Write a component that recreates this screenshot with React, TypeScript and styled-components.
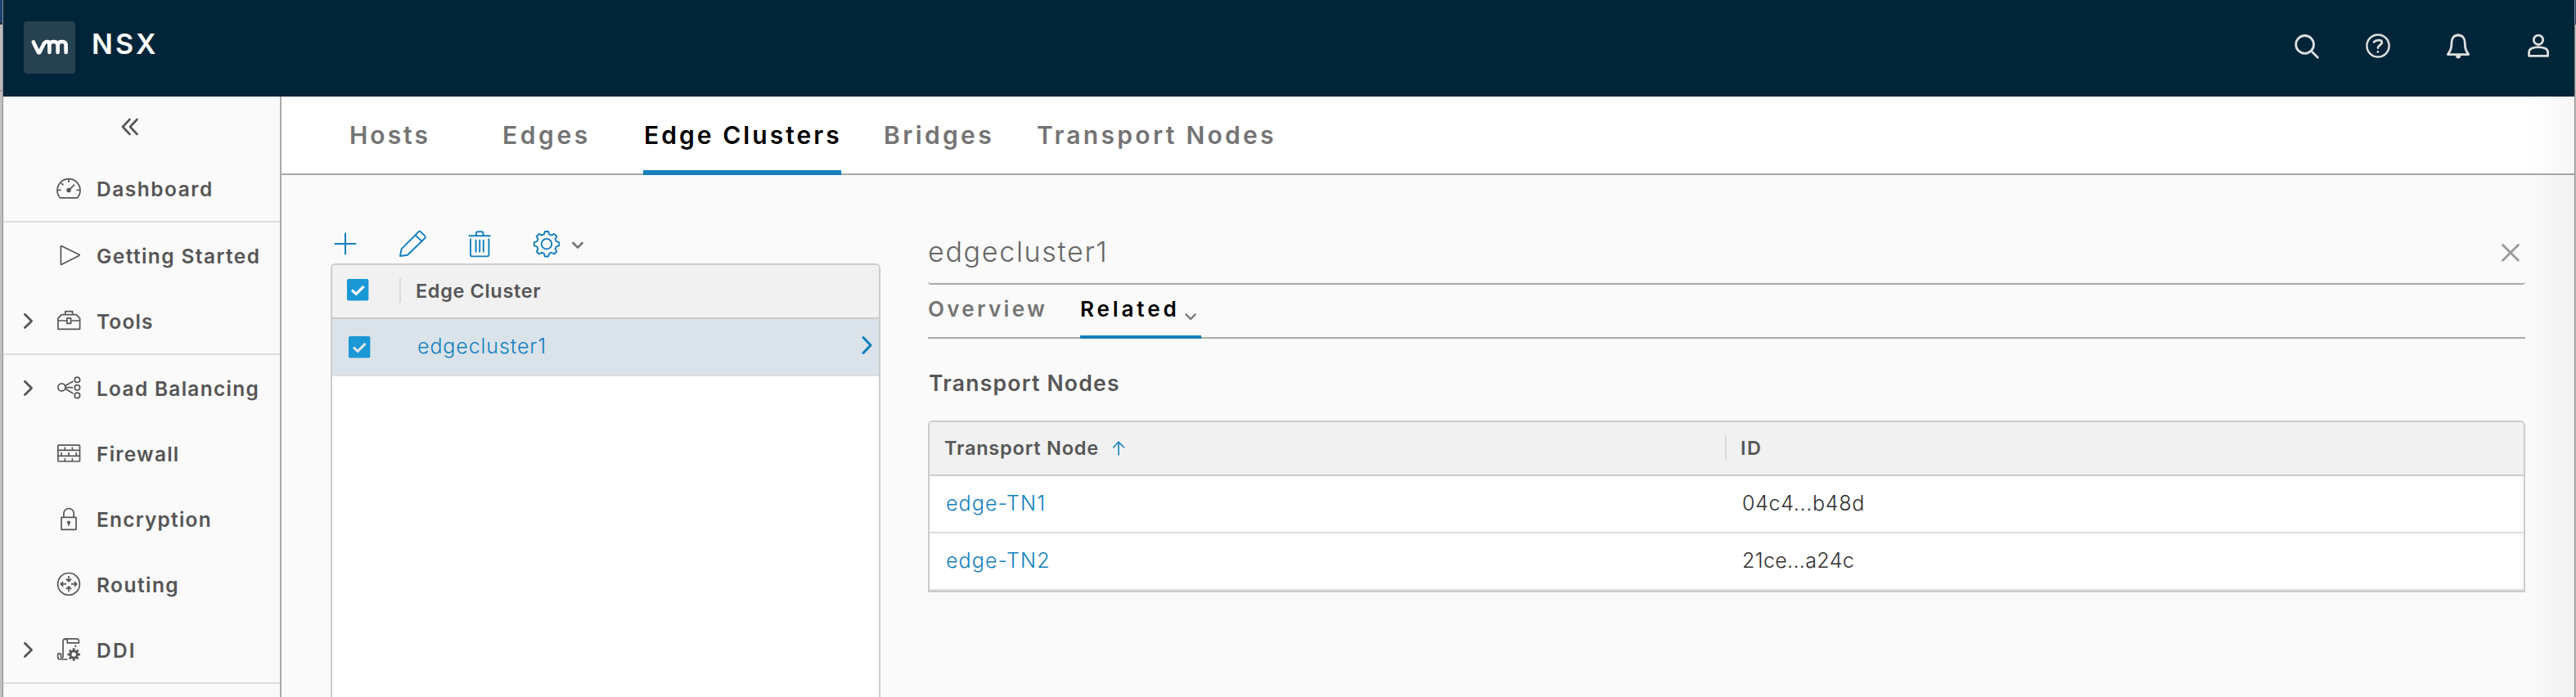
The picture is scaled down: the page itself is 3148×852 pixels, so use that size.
import type { ReactNode } from 'react';
import styled, { createGlobalStyle } from 'styled-components';

const GlobalStyle = createGlobalStyle`
  * { box-sizing: border-box; }
  body { margin: 0; font-family: Inter, "Liberation Sans", sans-serif; background: #fafafa; }
`;

const Screen = styled.div`
  display: flex;
  width: 3148px;
  height: 852px;
  overflow: hidden;
`;

/* Slices of the desktop visible on both sides of the browser window */
const DesktopEdge = styled.div<{ $side: 'left' | 'right' }>`
  flex: none;
  width: ${p => (p.$side === 'left' ? 4 : 2)}px;
  overflow: hidden;
  border-${p => (p.$side === 'left' ? 'right' : 'left')}: 1px solid #8c8c8c;
  background: linear-gradient(#1d4070 0 28px, #23272d 28px 30px, #bcbcbc 30px 110px, #9c9c9c 110px 112px, #c0c0c0 112px);
`;

const Window = styled.div`
  flex: 1;
  display: flex;
  flex-direction: column;
  min-width: 0;
`;

const Header = styled.header`
  flex: none;
  display: flex;
  height: 118px;
  padding-left: 25px;
  padding-right: 26px;
  background: #002538;
  border-bottom: 1px solid #001d30;
`;

const Logo = styled.svg`
  flex: none;
  width: 63px;
  height: 64px;
  margin-top: 26px;
`;

const Product = styled.div`
  margin-left: 20px;
  padding-top: 34px;
  font-size: 34px;
  font-weight: 600;
  line-height: 40px;
  letter-spacing: 3.2px;
  color: #fff;
`;

const HeaderActions = styled.div`
  display: flex;
  margin-left: auto;
  padding-top: 38px;
`;

const HeaderIcon = styled.svg<{ $gap?: number }>`
  width: 36px;
  height: 36px;
  margin-left: ${p => p.$gap ?? 0}px;
  fill: none;
  stroke: #dedede;
  stroke-width: 2.8;
  stroke-linecap: round;
  stroke-linejoin: round;
`;

const Body = styled.div`
  position: relative;
  flex: 1;
  display: flex;
  min-height: 0;
  background: #fafafa;
`;

const EdgeShade = styled.div`
  position: absolute;
  top: 0;
  right: 0;
  bottom: 0;
  width: 60px;
  background: linear-gradient(to right, rgba(0, 0, 0, 0), rgba(0, 0, 0, 0.012) 40%, rgba(0, 0, 0, 0.035));
`;

const Sidebar = styled.nav`
  flex: none;
  width: 340px;
  overflow: hidden;
  border-right: 2px solid #a9a9a9;
`;

const Collapse = styled.div`
  display: flex;
  justify-content: center;
  height: 72px;
  padding: 26px 28px 0 0;
`;

const NavGroup = styled.div`
  border-bottom: 2px solid #dcdcdc;
`;

const NavRow = styled.div`
  display: flex;
  align-items: center;
  height: 80px;
  padding-left: 22px;
`;

const NavArrow = styled.div`
  width: 42px;
  height: 24px;
`;

const NavIcon = styled.svg`
  flex: none;
  width: 32px;
  height: 32px;
  fill: none;
  stroke: #565656;
  stroke-width: 1.7;
  stroke-linejoin: round;
`;

const NavLabel = styled.span<{ $track: number }>`
  margin-left: 18px;
  padding-top: 2px;
  font-size: 24.5px;
  font-weight: 600;
  white-space: nowrap;
  letter-spacing: ${p => p.$track}px;
  color: #565656;
`;

const Stroke = styled.svg<{ $w: number; $h: number; $color: string; $sw?: number }>`
  display: block;
  flex: none;
  width: ${p => p.$w}px;
  height: ${p => p.$h}px;
  fill: none;
  stroke: ${p => p.$color};
  stroke-width: ${p => p.$sw ?? 2};
  stroke-linecap: round;
  stroke-linejoin: round;
`;

const Main = styled.main`
  flex: 1;
  display: flex;
  flex-direction: column;
  min-width: 0;
`;

const TabBar = styled.div`
  flex: none;
  display: flex;
  height: 96px;
  padding-left: 82px;
  background: #fff;
  box-shadow: inset 0 -2px #a9a9a9;
`;

const TabSlot = styled.div<{ $width: number }>`
  width: ${p => p.$width}px;
`;

const Tab = styled.div<{ $active?: boolean; $track: number }>`
  width: 242px;
  height: 96px;
  padding-left: 1px;
  font-size: 30px;
  font-weight: 600;
  line-height: 94px;
  white-space: nowrap;
  letter-spacing: ${p => p.$track}px;
  color: ${p => (p.$active ? '#000' : '#747474')};
  border-bottom: ${p => (p.$active ? '6px solid #1380bd' : 'none')};
`;

const Content = styled.div`
  flex: 1;
  display: flex;
  gap: 58px;
  min-height: 0;
  padding: 0 60px;
`;

const ListPane = styled.section`
  flex: none;
  display: flex;
  flex-direction: column;
  width: 672px;
`;

const Toolbar = styled.div`
  flex: none;
  display: flex;
  align-items: center;
  height: 108px;
  padding: 60px 0 1px 2px;
`;

const ToolButton = styled.div<{ $width: number }>`
  width: ${p => p.$width}px;
`;

const Grid = styled.div<{ $open?: boolean }>`
  ${p => (p.$open ? 'flex: 1;' : '')}
  border: 2px solid #cccccc;
  border-bottom-width: ${p => (p.$open ? 0 : 2)}px;
  border-radius: 6px 6px 0 0;
  background: #fff;
`;

const GridHead = styled.div`
  display: flex;
  align-items: center;
  height: 66px;
  border-bottom: 2px solid #cccccc;
  border-radius: 4px 4px 0 0;
  background: #f1f1f1;
  font-size: 23.5px;
  font-weight: 600;
  color: #565656;
`;

const GridRow = styled.div<{ $selected?: boolean }>`
  display: flex;
  align-items: center;
  height: 70px;
  border-bottom: 2px solid #dddddd;
  background: ${p => (p.$selected ? '#dae3ea' : '#fff')};
  font-size: 25px;
  font-weight: 350;
  color: #313131;
`;

const CheckCell = styled.div<{ $row?: boolean }>`
  width: 82px;
  padding-left: ${p => (p.$row ? 20 : 18)}px;
  padding-bottom: ${p => (p.$row ? 0 : 3)}px;
`;

const CheckBox = styled.svg`
  display: block;
  width: 27px;
  height: 27px;
`;

const Separator = styled.div`
  width: 2px;
  height: 30px;
  margin-bottom: 2px;
  background: #dadada;
`;

const Cell = styled.div<{ $width?: number; $left: number; $track: number; $link?: boolean; $lift?: number }>`
  ${p => (p.$width ? `width: ${p.$width}px;` : 'flex: 1;')}
  display: flex;
  align-items: center;
  padding-left: ${p => p.$left}px;
  padding-bottom: ${p => p.$lift ?? 0}px;
  white-space: nowrap;
  letter-spacing: ${p => p.$track}px;
  ${p => (p.$link ? 'color: #1380bd;' : '')}
`;

const RowArrow = styled.div`
  padding: 0 6px 4px 0;
`;

const DetailPane = styled.section`
  width: 1952px;
`;

const TitleRow = styled.div`
  display: flex;
  justify-content: space-between;
  height: 134px;
  padding: 68px 5px 0 0;
  border-bottom: 2px solid #a9a9a9;
  border-radius: 4px;
`;

const Title = styled.h1`
  margin: 0;
  font-size: 34px;
  font-weight: 300;
  line-height: 52px;
  letter-spacing: 1.7px;
  color: #666666;
`;

const CloseButton = styled.div`
  padding-top: 14px;
`;

const SubTabs = styled.div`
  display: flex;
  height: 66px;
  box-shadow: inset 0 -2px #a9a9a9;
`;

const SubTab = styled.div<{ $active?: boolean; $width: number; $track: number }>`
  display: flex;
  width: ${p => p.$width}px;
  height: 66px;
  font-size: 26px;
  font-weight: 600;
  line-height: 60px;
  letter-spacing: ${p => p.$track}px;
  color: ${p => (p.$active ? '#000' : '#747474')};
  border-bottom: ${p => (p.$active ? '4px solid #1380bd' : 'none')};
`;

const TabCaret = styled.div`
  margin-left: 5px;
  padding-top: 35px;
`;

const Heading = styled.h2`
  height: 100px;
  margin: 0;
  padding: 34px 0 0 1px;
  font-size: 26.5px;
  font-weight: 600;
  line-height: 40px;
  letter-spacing: 1.25px;
  color: #565656;
`;

const SortArrow = styled.div`
  margin-left: 16px;
`;

function gearPath(cx: number, cy: number, outer: number, inner: number, teeth = 8, tip = 0.15, root = 0.25) {
  const pt = (r: number, a: number) => `${(cx + r * Math.sin(a)).toFixed(2)} ${(cy - r * Math.cos(a)).toFixed(2)}`;
  const parts: string[] = [];
  for (let i = 0; i < teeth; i++) {
    const a = (i * 2 * Math.PI) / teeth;
    parts.push(pt(inner, a - root), pt(outer, a - tip), pt(outer, a + tip), pt(inner, a + root));
  }
  return `M${parts.join('L')}Z`;
}

const icons: Record<string, ReactNode> = {
  dashboard: (
    <>
      <path d="M5.4 27.8 A14 14 0 1 1 26.6 27.8 Z" />
      <path d="M16 5V9M2.4 18.4H6.5M25.5 18.4H29.6M7 9.8L9.4 12.2M16 18.6L23 11.6" />
      <circle cx="16" cy="18.6" r="1.9" fill="#565656" />
    </>
  ),
  play: <path d="M6.4 5.2C6.4 4.6 7 4.5 7.4 4.7L28.6 15.3C29.2 15.7 29.2 16.2 28.6 16.5L7.4 27.3C6.8 27.5 6.4 27.2 6.4 26.7Z" />,
  tools: (
    <>
      <path d="M2.9 26.3V13.2L7.3 8.6H25.2L29.6 13.2V26.3ZM11.8 8.4V4.6H20.6V8.4M3 16H13.4M19.2 16H29.4" />
      <rect x="13.9" y="12.9" width="4.7" height="6.4" />
    </>
  ),
  balance: (
    <>
      <circle cx="7.4" cy="15.4" r="4.5" />
      <circle cx="26.4" cy="6.3" r="3.2" />
      <circle cx="26.4" cy="15.8" r="3.2" />
      <circle cx="26.4" cy="25.4" r="3.2" />
      <path d="M11.8 13.6L21.5 8M12 15.6H21M11.8 17.3L21.5 23" />
    </>
  ),
  firewall: (
    <>
      <rect x="2.9" y="6.1" width="26.6" height="19.9" rx=".8" />
      <path d="M3 12.3H29.5M3 19.3H29.5M11.3 8.6V12M20.4 8.6V12M7 15V19M16 15V19M25.2 15V19M11.3 22.3V26M20.4 22.3V26" />
    </>
  ),
  lock: (
    <>
      <rect x="7" y="14.4" width="18" height="15" rx=".5" />
      <path d="M9.9 14V9A6.2 6.2 0 0 1 22.2 9V14M16 21V24.8" />
      <circle cx="16" cy="20.6" r="1.2" fill="#565656" />
    </>
  ),
  routing: (
    <>
      <circle cx="16" cy="15.9" r="13.4" />
      <path d="M16 6V12M12.9 9.6L16 12.7L19.1 9.6M16 25.6V19.6M12.9 22.2L16 19.1L19.1 22.2M13 15.9H6.4M9.2 13L6.3 15.9L9.2 18.8M19 15.9H25.6M22.8 13L25.7 15.9L22.8 18.8" />
    </>
  ),
  ddi: (
    <>
      <path d="M14.6 28H5.4C3.6 28 2.7 26.7 2.7 25V21.2H6.4V24.6C6.4 26.6 9 27 9 24.4V6.4C9 4.2 10.2 2.9 12.4 2.9H25.4C27.4 2.9 28.4 4.2 28.4 5.6V7.8H14.2V5.4C14.2 3.8 13.4 2.9 12 2.9M24.3 10.6V13" />
      <path d={gearPath(22.2, 22, 7.3, 5.2, 8, 0.13, 0.2)} fill="#565656" stroke="#565656" strokeWidth="1" />
      <circle cx="22.2" cy="22" r="2.7" fill="#fafafa" stroke="none" />
    </>
  ),
};

type NavItem = { label: string; icon: string; track: number; expandable?: boolean };

const navGroups: NavItem[][] = [
  [{ label: 'Dashboard', icon: 'dashboard', track: 1.5 }],
  [
    { label: 'Getting Started', icon: 'play', track: 1.4 },
    { label: 'Tools', icon: 'tools', track: 1.1, expandable: true },
  ],
  [
    { label: 'Load Balancing', icon: 'balance', track: 1.27, expandable: true },
    { label: 'Firewall', icon: 'firewall', track: 1.25 },
    { label: 'Encryption', icon: 'lock', track: 1.2 },
    { label: 'Routing', icon: 'routing', track: 1.45 },
    { label: 'DDI', icon: 'ddi', track: 2.2, expandable: true },
  ],
];

const tabs = [
  { label: 'Hosts', width: 187, track: 3 },
  { label: 'Edges', width: 173, track: 3.6 },
  { label: 'Edge Clusters', width: 293, track: 3.05, active: true },
  { label: 'Bridges', width: 187, track: 3.35 },
  { label: 'Transport Nodes', width: 300, track: 3.3 },
];

const nodes = [
  { name: 'edge-TN1', id: '04c4...b48d', track: 0.7 },
  { name: 'edge-TN2', id: '21ce...a24c', track: 0.35 },
];

function Check({ mark }: { mark: string }) {
  return (
    <CheckBox viewBox="0 0 27 27">
      <rect width="26.4" height="26.6" rx="2" fill="#1a97d5" />
      <path d="M6 13.6L11.2 18.4L20.6 9" fill="none" stroke={mark} strokeWidth="3.2" />
    </CheckBox>
  );
}

export default function App() {
  return (
    <Screen>
      <GlobalStyle />
      <DesktopEdge $side="left" />
      <Window>
        <Header>
          <Logo viewBox="0 0 63 64">
            <rect width="63" height="64" rx="4" fill="#264150" />
            <path
              d="M11.8 25.4L17.6 37.6Q18.6 39.3 19.6 37.6L24.6 27.4Q26 25 28.4 25Q31.4 25 31.4 28.4V38M31.4 29.4Q31.4 25 35.8 25H37.2Q41.6 25 41.6 29.4V38M41.6 29.4Q41.6 25 46 25H47.4Q51.6 25 51.6 29.4V38"
              fill="none"
              stroke="#fff"
              strokeWidth="4.6"
              strokeLinecap="round"
              strokeLinejoin="round"
            />
          </Logo>
          <Product>NSX</Product>
          <HeaderActions>
            <HeaderIcon viewBox="0 0 36 36">
              <circle cx="15.6" cy="16.4" r="10.9" />
              <path d="M24.6 25.6L31.4 32.2" />
            </HeaderIcon>
            <HeaderIcon $gap={51} viewBox="0 0 36 36">
              <circle cx="18" cy="18" r="13.6" strokeWidth="2.5" />
              <path d="M13 13.4C15 11 22.8 9.4 22.8 13.8C22.8 17 17.9 17.2 17.9 20.6M17.9 25.3V25.4" />
            </HeaderIcon>
            <HeaderIcon $gap={62} viewBox="0 0 36 36">
              <path d="M18 5C12.4 5 10 9.4 10 14C10 21.4 8.6 23.6 5.4 28.6H30.6C27.4 23.6 26.2 21.4 26.2 14C26.2 9.4 23.6 5 18 5Z" />
              <path d="M16 30.6A2.1 2.1 0 0 0 20.2 30.6ZM18 3.8V5" fill="#dedede" strokeWidth="1.8" />
            </HeaderIcon>
            <HeaderIcon $gap={62} viewBox="0 0 36 36">
              <circle cx="18" cy="10.8" r="5.7" />
              <path d="M6.6 30.4V25.4C6.6 21.6 12 19.6 18 19.6S29.6 21.6 29.6 25.4V30.4Z" />
            </HeaderIcon>
          </HeaderActions>
        </Header>
        <Body>
          <Sidebar>
            <Collapse>
              <Stroke viewBox="0 0 22 22" $w={22} $h={22} $color="#565656" $sw={2.6}>
                <path d="M10.5 2L2 11L10.5 20M19.5 2L11 11L19.5 20" />
              </Stroke>
            </Collapse>
            {navGroups.map(group => (
              <NavGroup key={group[0].label}>
                {group.map(item => (
                  <NavRow key={item.label}>
                    <NavArrow>
                      {item.expandable && (
                        <Stroke viewBox="0 0 18 24" $w={18} $h={24} $color="#565656" $sw={2.8}>
                          <path d="M4.4 4.2L12.6 12.4L4.4 20.6" />
                        </Stroke>
                      )}
                    </NavArrow>
                    <NavIcon viewBox="0 0 32 32">{icons[item.icon]}</NavIcon>
                    <NavLabel $track={item.track}>{item.label}</NavLabel>
                  </NavRow>
                ))}
              </NavGroup>
            ))}
          </Sidebar>
          <Main>
            <TabBar>
              {tabs.map(tab => (
                <TabSlot key={tab.label} $width={tab.width}>
                  <Tab $active={tab.active} $track={tab.track}>{tab.label}</Tab>
                </TabSlot>
              ))}
            </TabBar>
            <Content>
              <ListPane>
                <Toolbar>
                  <ToolButton $width={81}>
                    <Stroke viewBox="0 0 34 34" $w={34} $h={34} $color="#1380bd">
                      <path d="M16 4.5V29.5M3.5 17H28.5" strokeWidth="2" />
                    </Stroke>
                  </ToolButton>
                  <ToolButton $width={83}>
                    <Stroke viewBox="0 0 34 34" $w={34} $h={34} $color="#1380bd">
                      <path d="M2 32L3.6 23.4L24.4 2.4Q25.8 1.2 27.2 2.4L32.2 7.4Q33.4 8.8 32.2 10.2L11 30.8ZM20.6 6.4L28.6 14" strokeWidth="1.9" />
                    </Stroke>
                  </ToolButton>
                  <ToolButton $width={80}>
                    <Stroke viewBox="0 0 34 34" $w={34} $h={34} $color="#1380bd">
                      <path d="M3.4 7.2H28.8M5 11.4V30.2Q5 32.4 7.2 32.4H25.2Q27.4 32.4 27.4 30.2V11.4M12 6.8V4Q12 2.2 13.8 2.2H18.6Q20.4 2.2 20.4 4V6.8M11.6 12.6V26.8M16.2 12.6V26.8M20.8 12.6V26.8" strokeWidth="1.9" />
                    </Stroke>
                  </ToolButton>
                  <ToolButton $width={45}>
                    <Stroke viewBox="0 0 34 34" $w={34} $h={34} $color="#1380bd">
                      <path d={gearPath(18, 17.2, 15.4, 12.2, 8, 0.14, 0.26)} strokeWidth="1.9" />
                      <circle cx="18" cy="17.2" r="6.3" strokeWidth="1.9" />
                    </Stroke>
                  </ToolButton>
                  <Stroke viewBox="0 0 20 14" $w={20} $h={14} $color="#747474" $sw={2.6}>
                    <path d="M5.4 6L11 11.6L16.6 6" />
                  </Stroke>
                </Toolbar>
                <Grid $open>
                  <GridHead>
                    <CheckCell><Check mark="#ffffff" /></CheckCell>
                    <Separator />
                    <Cell $left={18} $track={0.64} $lift={1}>Edge Cluster</Cell>
                  </GridHead>
                  <GridRow $selected>
                    <CheckCell $row><Check mark="#dae3ea" /></CheckCell>
                    <Cell $left={22} $track={0.9} $lift={2} $link>edgecluster1</Cell>
                    <RowArrow>
                      <Stroke viewBox="0 0 18 24" $w={18} $h={24} $color="#1380bd" $sw={3}>
                        <path d="M5 2.6L14 12L5 21.4" />
                      </Stroke>
                    </RowArrow>
                  </GridRow>
                </Grid>
              </ListPane>
              <DetailPane>
                <TitleRow>
                  <Title>edgecluster1</Title>
                  <CloseButton>
                    <Stroke viewBox="0 0 26 26" $w={26} $h={26} $color="#999999" $sw={2.8}>
                      <path d="M3.6 3.4L22.4 22.2M22.4 3.4L3.6 22.2" />
                    </Stroke>
                  </CloseButton>
                </TitleRow>
                <SubTabs>
                  <SubTab $width={186} $track={3.3}>Overview</SubTab>
                  <SubTab $width={148} $track={3.9} $active>
                    Related
                    <TabCaret>
                      <Stroke viewBox="0 0 16 9" $w={16} $h={9} $color="#747474" $sw={2.2}>
                        <path d="M2.4 1.4L8 7L13.6 1.4" />
                      </Stroke>
                    </TabCaret>
                  </SubTab>
                </SubTabs>
                <Heading>Transport Nodes</Heading>
                <Grid>
                  <GridHead>
                    <Cell $width={972} $left={18} $track={0.8} $lift={1}>
                      Transport Node
                      <SortArrow>
                        <Stroke viewBox="0 0 16 20" $w={16} $h={20} $color="#1380bd" $sw={1.6}>
                          <path d="M8 18V2.4M1.6 8.8L8 2.2L14.4 8.8" />
                        </Stroke>
                      </SortArrow>
                    </Cell>
                    <Separator />
                    <Cell $left={17} $track={1.5} $lift={1}>ID</Cell>
                  </GridHead>
                  {nodes.map(node => (
                    <GridRow key={node.id}>
                      <Cell $width={993} $left={20} $track={1.1} $lift={2} $link>{node.name}</Cell>
                      <Cell $left={0} $track={node.track} $lift={2}>{node.id}</Cell>
                    </GridRow>
                  ))}
                </Grid>
              </DetailPane>
            </Content>
          </Main>
          <EdgeShade />
        </Body>
      </Window>
      <DesktopEdge $side="right" />
    </Screen>
  );
}
